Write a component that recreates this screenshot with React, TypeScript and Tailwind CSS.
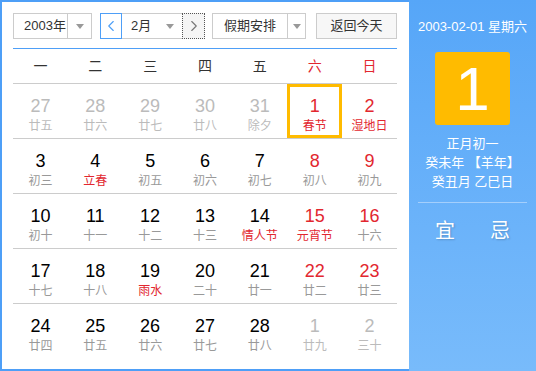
import { ChevronLeft, ChevronRight } from 'lucide-react';

type Day = { d: number; lunar: string; muted?: boolean; red?: boolean; lunarRed?: boolean; today?: boolean };

const weeks: Day[][] = [
  [
    { d: 27, lunar: '廿五', muted: true },
    { d: 28, lunar: '廿六', muted: true },
    { d: 29, lunar: '廿七', muted: true },
    { d: 30, lunar: '廿八', muted: true },
    { d: 31, lunar: '除夕', muted: true },
    { d: 1, lunar: '春节', red: true, lunarRed: true, today: true },
    { d: 2, lunar: '湿地日', red: true, lunarRed: true },
  ],
  [
    { d: 3, lunar: '初三' },
    { d: 4, lunar: '立春', lunarRed: true },
    { d: 5, lunar: '初五' },
    { d: 6, lunar: '初六' },
    { d: 7, lunar: '初七' },
    { d: 8, lunar: '初八', red: true },
    { d: 9, lunar: '初九', red: true },
  ],
  [
    { d: 10, lunar: '初十' },
    { d: 11, lunar: '十一' },
    { d: 12, lunar: '十二' },
    { d: 13, lunar: '十三' },
    { d: 14, lunar: '情人节', lunarRed: true },
    { d: 15, lunar: '元宵节', red: true, lunarRed: true },
    { d: 16, lunar: '十六', red: true },
  ],
  [
    { d: 17, lunar: '十七' },
    { d: 18, lunar: '十八' },
    { d: 19, lunar: '雨水', lunarRed: true },
    { d: 20, lunar: '二十' },
    { d: 21, lunar: '廿一' },
    { d: 22, lunar: '廿二', red: true },
    { d: 23, lunar: '廿三', red: true },
  ],
  [
    { d: 24, lunar: '廿四' },
    { d: 25, lunar: '廿五' },
    { d: 26, lunar: '廿六' },
    { d: 27, lunar: '廿七' },
    { d: 28, lunar: '廿八' },
    { d: 1, lunar: '廿九', muted: true },
    { d: 2, lunar: '三十', muted: true },
  ],
];

const weekdays = ['一', '二', '三', '四', '五', '六', '日'];

function Caret() {
  return <span className="w-0 h-0 border-l-[4px] border-r-[4px] border-t-[5px] border-l-transparent border-r-transparent border-t-[#999]" />;
}

function DayCell({ day }: { day: Day }) {
  const numColor = day.muted ? 'text-[#bbb]' : day.red ? 'text-[#e2272f]' : 'text-black';
  const lunarColor = day.muted ? 'text-[#bbb]' : day.lunarRed ? 'text-[#e2272f]' : 'text-[#999]';
  return (
    <div className="relative flex flex-col items-center pt-[12px]">
      {day.today && <div className="absolute inset-0 border-[3px] border-[#ffbb00]" />}
      <span className={`text-[18px] leading-[20px] ${numColor}`}>{day.d}</span>
      <span className={`text-[12px] leading-[16px] mt-[2px] ${lunarColor}`}>{day.lunar}</span>
    </div>
  );
}

export default function App() {
  return (
    <div
      className="w-[536px] h-[371px] flex bg-white text-[#333]"
      style={{ fontFamily: '"Liberation Sans", "Noto Sans CJK SC", sans-serif' }}
    >
      <div className="w-[409px] h-full border-l-2 border-t-2 border-b-2 border-[#4e9ff7] pt-[11px] pl-[11px] pr-[12px]">
        <div className="flex items-center h-[26px] text-[13px]">
          <div className="flex items-center w-[79px] h-full border border-[#ccc]">
            <span className="flex-1 pl-[10px]">2003年</span>
            <span className="w-[24px] h-full border-l border-[#ccc] flex items-center justify-center">
              <Caret />
            </span>
          </div>
          <div className="flex items-center h-full ml-[8px]">
            <span className="w-[22px] h-full border border-[#4e9ff7] flex items-center justify-center text-[#4e9ff7]">
              <ChevronLeft size={18} strokeWidth={1.5} />
            </span>
            <div className="w-[60px] h-full border-t border-b border-[#ccc] flex items-center">
              <span className="flex-1 pl-[9px]">2月</span>
              <span className="pr-[8px] flex items-center">
                <Caret />
              </span>
            </div>
            <span className="w-[23px] h-full border border-dotted border-[#555] bg-[#f5f5f5] flex items-center justify-center text-[#777]">
              <ChevronRight size={18} strokeWidth={1.5} />
            </span>
          </div>
          <div className="flex items-center w-[94px] h-full border border-[#ccc] ml-[7px]">
            <span className="flex-1 pl-[11px]">假期安排</span>
            <span className="w-[18px] h-full border-l border-[#ccc] flex items-center justify-center">
              <Caret />
            </span>
          </div>
          <div className="w-[81px] h-full border border-[#ccc] bg-[#f7f7f7] ml-[10px] flex items-center justify-center">
            返回今天
          </div>
        </div>

        <div className="mt-[9px] border-t border-[#4e9ff7]">
          <div className="grid grid-cols-7 h-[35px] border-b border-[#ccc] items-center text-[14px]">
            {weekdays.map((w, i) => (
              <div key={w} className={`text-center ${i >= 5 ? 'text-[#e2272f]' : 'text-[#333]'}`}>
                {w}
              </div>
            ))}
          </div>
          {weeks.map((week, wi) => (
            <div
              key={wi}
              className={`grid grid-cols-7 h-[55px] ${wi < weeks.length - 1 ? 'border-b border-[#ccc]' : ''}`}
            >
              {week.map((day, di) => (
                <DayCell key={di} day={day} />
              ))}
            </div>
          ))}
        </div>
      </div>

      <div className="flex-1 h-full bg-gradient-to-b from-[#56a6f8] to-[#78bbfb] flex flex-col items-center text-white">
        <div className="mt-[19px] text-[13px] leading-[16px]">2003-02-01 星期六</div>
        <div className="mt-[17px] w-[75px] h-[73px] rounded-[3px] bg-[#ffbb00] flex items-center justify-center text-[62px] leading-none">
          1
        </div>
        <div className="mt-[9px] text-[13px] leading-[19px] flex flex-col items-center">
          <span>正月初一</span>
          <span>癸未年 【羊年】</span>
          <span>癸丑月 乙巳日</span>
        </div>
        <div className="mt-[11px] w-[109px] h-px bg-[#a4cffc]" />
        <div className="mt-[16px] flex gap-[35px] text-[20px] leading-[24px] [text-shadow:1px_1px_2px_rgba(0,0,0,0.2)]">
          <span>宜</span>
          <span>忌</span>
        </div>
      </div>
    </div>
  );
}
